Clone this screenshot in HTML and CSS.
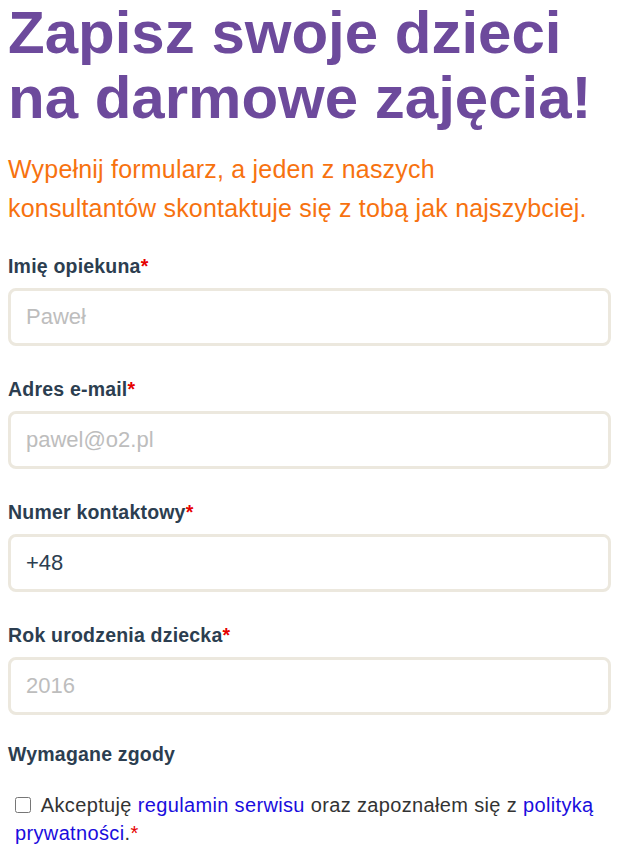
FILE: index.html
```html
<!DOCTYPE html>
<html lang="pl">
<head>
<meta charset="utf-8">
<link rel="stylesheet" href="styles.css">
</head>
<body>
<main class="page">
  <h1 class="title">Zapisz swoje dzieci na darmowe zajęcia!</h1>
  <p class="lead">Wypełnij formularz, a jeden z naszych<br>konsultantów skontaktuje się z tobą jak najszybciej.</p>
  <form class="form">
    <div class="field">
      <label class="label">Imię opiekuna<span class="req">*</span></label>
      <input class="input" type="text" placeholder="Paweł">
    </div>
    <div class="field">
      <label class="label">Adres e-mail<span class="req">*</span></label>
      <input class="input" type="text" placeholder="pawel@o2.pl">
    </div>
    <div class="field">
      <label class="label">Numer kontaktowy<span class="req">*</span></label>
      <input class="input" type="text" value="+48">
    </div>
    <div class="field field-last">
      <label class="label">Rok urodzenia dziecka<span class="req">*</span></label>
      <input class="input" type="text" placeholder="2016">
    </div>
    <div class="consents">
      <div class="label">Wymagane zgody</div>
      <p class="consent"><input class="check" type="checkbox"> Akceptuję <a href="#">regulamin serwisu</a> oraz zapoznałem się z <a href="#">polityką prywatności</a>.<span class="req">*</span></p>
    </div>
  </form>
</main>
</body>
</html>
```

FILE: styles.css
```css
html, body { margin: 0; padding: 0; background: #fff; }
body { font-family: "Liberation Sans", Arial, sans-serif; }
.page { padding: 0 6px 0 8px; }
.title {
  margin: 0;
  font-size: 60px;
  line-height: 65px;
  font-weight: 700;
  color: #6d4a9c;
  width: 603px;
}
.lead {
  margin: 20px 0 0;
  font-size: 25px;
  line-height: 39px;
  letter-spacing: 0.2px;
  color: #f7720f;
}
.form { margin-top: 26px; }
.field { margin-bottom: 31px; }
.field-last { margin-bottom: 27px; }
.label {
  display: block;
  font-size: 19.5px;
  font-weight: 700;
  color: #2c3e50;
  line-height: 24px;
  letter-spacing: 0.2px;
  margin-bottom: 10px;
}
.req { color: #e60000; }
.input {
  display: block;
  box-sizing: border-box;
  width: 603px;
  height: 58px;
  border: 3px solid #ece8de;
  border-radius: 8px;
  padding: 0 15px;
  font-family: "Liberation Sans", Arial, sans-serif;
  font-size: 22px;
  color: #2c3e50;
  background: #fff;
  outline: none;
}
.input::placeholder { color: #bdbdbd; }
.consent {
  margin: 25px 0 0;
  font-size: 20px;
  line-height: 28px;
  letter-spacing: 0.35px;
  color: #333;
  padding-left: 7px;
}
.consent a { color: #1a0ddd; text-decoration: none; }
.check {
  width: 16px; height: 16px;
  margin: 0 5px 0 0;
  vertical-align: -1px;
}
```
